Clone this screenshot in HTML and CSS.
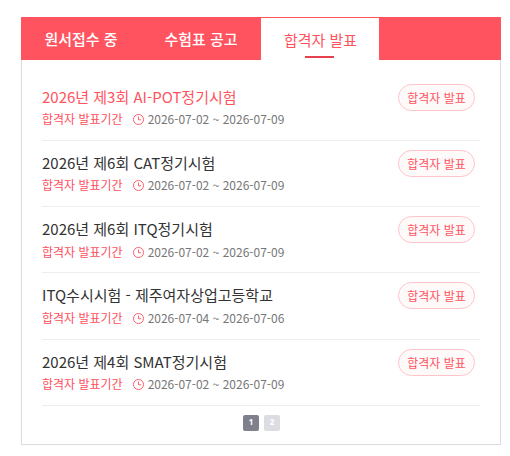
FILE: index.html
```html
<!DOCTYPE html>
<html lang="ko">
<head>
<meta charset="utf-8">
<title>합격자 발표</title>
<link rel="stylesheet" href="styles.css">
</head>
<body>
<section class="panel">
  <nav class="tabs">
    <a class="tab">원서접수 중</a>
    <a class="tab">수험표 공고</a>
    <a class="tab active">합격자 발표</a>
  </nav>
  <ul class="list">
    <li class="row first">
      <div class="info">
        <div class="name">2026년 제3회 AI-POT정기시험</div>
        <div class="meta"><span class="label">합격자 발표기간</span><svg class="clock" viewBox="0 0 12 12"><circle cx="6" cy="6" r="5.5"/><path d="M6 2.8v3.5h2.8"/></svg><span class="date">2026-07-02 ~ 2026-07-09</span></div>
      </div>
      <span class="pill">합격자 발표</span>
    </li>
    <li class="row">
      <div class="info">
        <div class="name">2026년 제6회 CAT정기시험</div>
        <div class="meta"><span class="label">합격자 발표기간</span><svg class="clock" viewBox="0 0 12 12"><circle cx="6" cy="6" r="5.5"/><path d="M6 2.8v3.5h2.8"/></svg><span class="date">2026-07-02 ~ 2026-07-09</span></div>
      </div>
      <span class="pill">합격자 발표</span>
    </li>
    <li class="row">
      <div class="info">
        <div class="name">2026년 제6회 ITQ정기시험</div>
        <div class="meta"><span class="label">합격자 발표기간</span><svg class="clock" viewBox="0 0 12 12"><circle cx="6" cy="6" r="5.5"/><path d="M6 2.8v3.5h2.8"/></svg><span class="date">2026-07-02 ~ 2026-07-09</span></div>
      </div>
      <span class="pill">합격자 발표</span>
    </li>
    <li class="row">
      <div class="info">
        <div class="name">ITQ수시시험 - 제주여자상업고등학교</div>
        <div class="meta"><span class="label">합격자 발표기간</span><svg class="clock" viewBox="0 0 12 12"><circle cx="6" cy="6" r="5.5"/><path d="M6 2.8v3.5h2.8"/></svg><span class="date">2026-07-04 ~ 2026-07-06</span></div>
      </div>
      <span class="pill">합격자 발표</span>
    </li>
    <li class="row">
      <div class="info">
        <div class="name">2026년 제4회 SMAT정기시험</div>
        <div class="meta"><span class="label">합격자 발표기간</span><svg class="clock" viewBox="0 0 12 12"><circle cx="6" cy="6" r="5.5"/><path d="M6 2.8v3.5h2.8"/></svg><span class="date">2026-07-02 ~ 2026-07-09</span></div>
      </div>
      <span class="pill">합격자 발표</span>
    </li>
  </ul>
  <div class="pager">
    <span class="page current">1</span>
    <span class="page">2</span>
  </div>
</section>
</body>
</html>
```
FILE: styles.css
```css
* { box-sizing: border-box; }
html, body { margin: 0; padding: 0; background: #fff; }
body {
  width: 510px;
  height: 456px;
  padding: 17px 9px 0 21px;
  font-family: "Noto Sans CJK KR", "Noto Sans", sans-serif;
  color: #333;
  overflow: hidden;
}
.panel {
  width: 480px;
  height: 428px;
  border: 1px solid #dcdce0;
  border-top: 0;
  display: flex;
  flex-direction: column;
}
.tabs {
  display: flex;
  height: 43px;
  margin: 0 -1px;
  background: #ff5360;
}
.tab {
  width: 120px;
  height: 43px;
  display: flex;
  align-items: center;
  justify-content: center;
  color: #fff;
  font-size: 15px;
  font-weight: 500;
  line-height: 43px;
}
.tab.active {
  position: relative;
  width: 118px;
  padding-left: 1px;
  background: #fff;
  color: #ff5360;
  font-weight: 400;
  border-top: 1px solid #ff5360;
}
.tab.active::after {
  content: "";
  position: absolute;
  left: 44px;
  bottom: 2px;
  width: 29px;
  height: 2px;
  background: #e8404c;
}
.list {
  list-style: none;
  margin: 0;
  padding: 14.7px 20px 0;
}
.row {
  display: flex;
  align-items: flex-start;
  justify-content: space-between;
  height: 66.25px;
  padding-top: 9px;
  border-bottom: 1px solid #eeeef0;
}
.info { display: flex; flex-direction: column; }
.name {
  margin-top: 1px;
  font-size: 15px;
  line-height: 24px;
  color: #333;
}
.first .name { color: #ff5360; }
.meta {
  display: flex;
  align-items: center;
  height: 22px;
  margin-top: -1px;
  font-size: 12px;
}
.label { color: #ff4f5d; }
.clock {
  width: 11px;
  height: 11px;
  margin: 2px 4px 0 10px;
  fill: none;
  stroke: #ff5360;
  stroke-width: 1;
}
.date { color: #777; }
.pill {
  margin: 0 5px 0 0;
  width: 77px;
  height: 27px;
  border: 1px solid #ffc4c8;
  border-radius: 14px;
  background: #fffafa;
  color: #ff5360;
  font-size: 12px;
  line-height: 25px;
  text-align: center;
}
.pager {
  display: flex;
  justify-content: center;
  gap: 5px;
  margin-top: 9px;
  margin-left: 1px;
}
.page {
  width: 16px;
  height: 16px;
  border-radius: 2px;
  background: #dcdde2;
  color: #fff;
  font-family: "Noto Sans", sans-serif;
  font-size: 8px;
  font-weight: 700;
  line-height: 14px;
  text-align: center;
}
.page.current { background: #7e808c; }
```
